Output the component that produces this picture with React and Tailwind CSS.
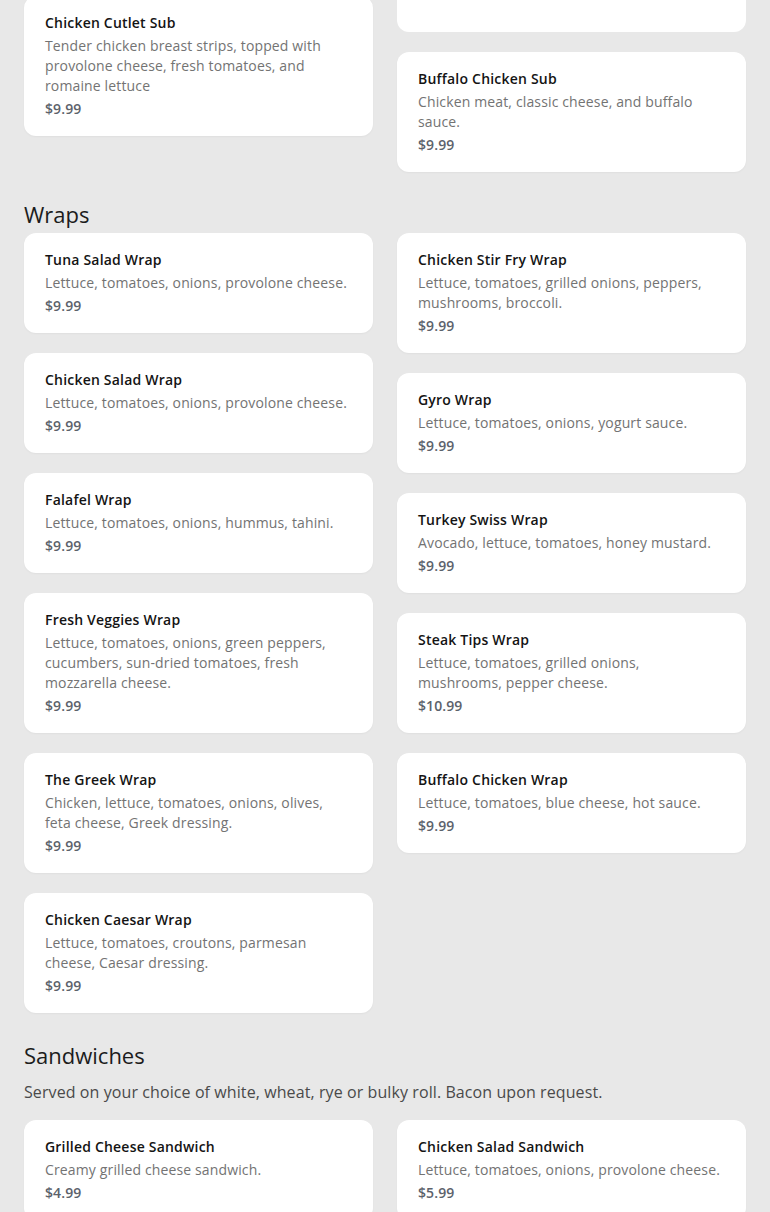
import React from "react";

const subs = {
  left: [
    {
      name: "Chicken Cutlet Sub",
      desc: "Tender chicken breast strips, topped with provolone cheese, fresh tomatoes, and romaine lettuce",
      price: "$9.99",
    },
  ],
  right: [
    {
      name: "Buffalo Chicken Sub",
      desc: "Chicken meat, classic cheese, and buffalo sauce.",
      price: "$9.99",
    },
  ],
};

const wraps = {
  left: [
    { name: "Tuna Salad Wrap", desc: "Lettuce, tomatoes, onions, provolone cheese.", price: "$9.99" },
    { name: "Chicken Salad Wrap", desc: "Lettuce, tomatoes, onions, provolone cheese.", price: "$9.99" },
    { name: "Falafel Wrap", desc: "Lettuce, tomatoes, onions, hummus, tahini.", price: "$9.99" },
    {
      name: "Fresh Veggies Wrap",
      desc: "Lettuce, tomatoes, onions, green peppers, cucumbers, sun-dried tomatoes, fresh mozzarella cheese.",
      price: "$9.99",
    },
    { name: "The Greek Wrap", desc: "Chicken, lettuce, tomatoes, onions, olives, feta cheese, Greek dressing.", price: "$9.99" },
    { name: "Chicken Caesar Wrap", desc: "Lettuce, tomatoes, croutons, parmesan cheese, Caesar dressing.", price: "$9.99" },
  ],
  right: [
    { name: "Chicken Stir Fry Wrap", desc: "Lettuce, tomatoes, grilled onions, peppers, mushrooms, broccoli.", price: "$9.99" },
    { name: "Gyro Wrap", desc: "Lettuce, tomatoes, onions, yogurt sauce.", price: "$9.99" },
    { name: "Turkey Swiss Wrap", desc: "Avocado, lettuce, tomatoes, honey mustard.", price: "$9.99" },
    { name: "Steak Tips Wrap", desc: "Lettuce, tomatoes, grilled onions, mushrooms, pepper cheese.", price: "$10.99" },
    { name: "Buffalo Chicken Wrap", desc: "Lettuce, tomatoes, blue cheese, hot sauce.", price: "$9.99" },
  ],
};

const sandwiches = {
  left: [{ name: "Grilled Cheese Sandwich", desc: "Creamy grilled cheese sandwich.", price: "$4.99" }],
  right: [{ name: "Chicken Salad Sandwich", desc: "Lettuce, tomatoes, onions, provolone cheese.", price: "$5.99" }],
};

function ItemCard({ item }) {
  return (
    <div className="bg-white rounded-xl px-[21px] pt-[17px] pb-[17px] shadow-[0_1px_2px_rgba(0,0,0,0.04)]">
      <h3 className="text-[14px] leading-5 font-semibold tracking-[0.2px] text-[#141414]">{item.name}</h3>
      <p className="mt-[3px] text-[14px] leading-5 tracking-[0.14px] text-[#737373]">{item.desc}</p>
      <p className="mt-[3px] text-[14px] leading-5 font-semibold tracking-[0.1px] text-[#5c626b]">{item.price}</p>
    </div>
  );
}

function Columns({ left, right, leftTop, rightTop }) {
  return (
    <div className="grid grid-cols-2 gap-6 items-start">
      <div className="flex flex-col gap-5">
        {leftTop}
        {left.map((item) => (
          <ItemCard key={item.name} item={item} />
        ))}
      </div>
      <div className="flex flex-col gap-5">
        {rightTop}
        {right.map((item) => (
          <ItemCard key={item.name} item={item} />
        ))}
      </div>
    </div>
  );
}

function SectionTitle({ children }) {
  return <h2 className="mt-7 text-[22px] leading-7 font-normal text-[#1c1c1c]">{children}</h2>;
}

export default function App() {
  return (
    <div
      className="min-h-screen bg-[#e8e8e8] overflow-hidden px-6 pb-10"
      style={{ fontFamily: '"Open Sans", "Noto Sans", sans-serif' }}
    >
      {/* Subs (scrolled past the top) */}
      <Columns
        left={subs.left}
        right={subs.right}
        leftTop={<div className="bg-white rounded-xl h-[100px] -mt-[124px]" />}
        rightTop={<div className="bg-white rounded-xl h-[100px] -mt-[68px]" />}
      />

      {/* Wraps */}
      <SectionTitle>Wraps</SectionTitle>
      <div className="mt-[5px]">
        <Columns left={wraps.left} right={wraps.right} />
      </div>

      {/* Sandwiches */}
      <SectionTitle>Sandwiches</SectionTitle>
      <p className="mt-[11px] text-[16px] leading-6 tracking-[0.09px] text-[#4a4a4a]">
        Served on your choice of white, wheat, rye or bulky roll. Bacon upon request.
      </p>
      <div className="mt-4">
        <Columns left={sandwiches.left} right={sandwiches.right} />
      </div>
    </div>
  );
}
